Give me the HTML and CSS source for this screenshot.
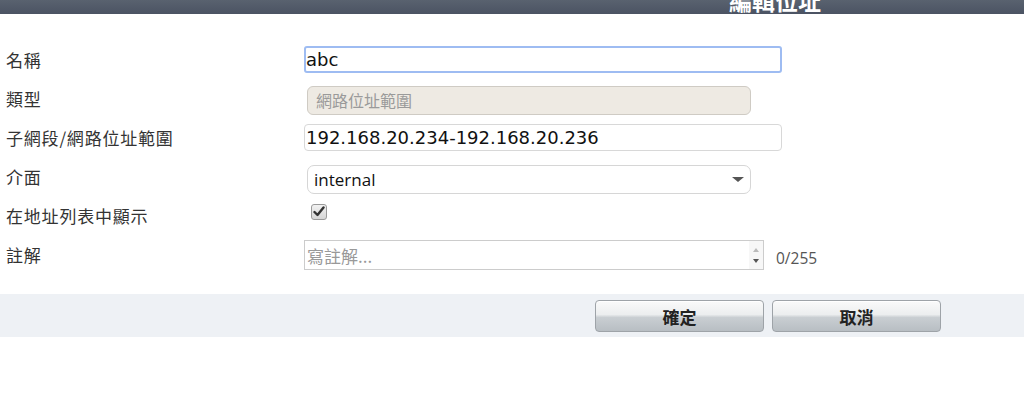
FILE: index.html
```html
<!DOCTYPE html>
<html lang="zh-Hant">
<head>
<meta charset="utf-8">
<title>編輯位址</title>
<link rel="stylesheet" href="styles.css">
</head>
<body>
<div class="header"><span class="title">編輯位址</span></div>
<div class="form">
  <div class="row">
    <div class="label">名稱</div>
    <div class="ctrl"><div class="input focus">abc</div></div>
  </div>
  <div class="row">
    <div class="label">類型</div>
    <div class="ctrl"><div class="disabled">網路位址範圍</div></div>
  </div>
  <div class="row">
    <div class="label">子網段/網路位址範圍</div>
    <div class="ctrl"><div class="input">192.168.20.234-192.168.20.236</div></div>
  </div>
  <div class="row">
    <div class="label">介面</div>
    <div class="ctrl"><div class="select"><span>internal</span><span class="arrow"></span></div></div>
  </div>
  <div class="row">
    <div class="label">在地址列表中顯示</div>
    <div class="ctrl"><div class="checkbox"><svg width="12" height="11" viewBox="0 0 12 11"><path d="M1.5 6 L4.5 9 L10.5 1.5" fill="none" stroke="#333" stroke-width="2.4" stroke-linecap="round" stroke-linejoin="round"/></svg></div></div>
  </div>
  <div class="row">
    <div class="label">註解</div>
    <div class="ctrl comment-ctrl">
      <div class="textarea"><span class="ph">寫註解...</span><span class="spin"><span class="up"></span><span class="down"></span></span></div>
      <span class="count">0/255</span>
    </div>
  </div>
</div>
<div class="footer">
  <button class="btn">確定</button>
  <button class="btn">取消</button>
</div>
</body>
</html>
```
FILE: styles.css
```css
html, body {
  margin: 0;
  padding: 0;
  background: #ffffff;
  font-family: "Noto Sans CJK TC", "DejaVu Sans", sans-serif;
  color: #222;
}
.header {
  height: 14px;
  overflow: hidden;
  background: linear-gradient(#59626f, #4b5363);
  padding-left: 729px;
}
.title {
  display: block;
  margin-top: -12px;
  font-size: 23px;
  line-height: 24px;
  font-weight: bold;
  color: #fff;
}
.form {
  padding-top: 26px;
}
.row {
  display: flex;
  align-items: center;
  height: 39px;
}
.label {
  width: 298px;
  padding-left: 6px;
  font-size: 17px;
  letter-spacing: 0.8px;
  color: #333;
}
.ctrl {
  display: flex;
  align-items: center;
}
.input {
  box-sizing: border-box;
  width: 478px;
  height: 27px;
  border: 1px solid #d8d8d8;
  border-radius: 4px;
  padding-left: 1px;
  font-family: "DejaVu Sans", sans-serif;
  font-size: 18px;
  line-height: 25px;
  color: #111;
}
.input.focus {
  border: 2px solid #9ebcf2;
  border-radius: 3px;
  line-height: 23px;
  padding-left: 0;
}
.disabled {
  box-sizing: border-box;
  width: 444px;
  height: 29px;
  margin-left: 3px;
  margin-top: 4px;
  border: 1px solid #cfcbc4;
  border-radius: 6px;
  background: #eeeae3;
  padding-left: 8px;
  font-size: 16px;
  line-height: 26px;
  color: #9a9a9a;
}
.select {
  box-sizing: border-box;
  width: 444px;
  height: 29px;
  margin-left: 3px;
  margin-top: 5px;
  border: 1px solid #d6d6d6;
  border-radius: 7px;
  padding: 0 5px 0 6px;
  display: flex;
  align-items: center;
  justify-content: space-between;
  font-family: "Open Sans", sans-serif;
  font-size: 17px;
  color: #111;
}
.arrow {
  width: 0;
  height: 0;
  border-left: 6px solid transparent;
  border-right: 6px solid transparent;
  border-top: 5px solid #555;
  margin-right: 1px;
}
.checkbox {
  box-sizing: border-box;
  width: 16px;
  height: 16px;
  margin-left: 7px;
  margin-top: -8px;
  border: 1px solid #9a9a9a;
  border-radius: 3px;
  background: linear-gradient(#f2f2f2, #d6d6d6);
  display: flex;
  align-items: center;
  justify-content: center;
}
.comment-ctrl {
  margin-top: 1px;
}
.textarea {
  box-sizing: border-box;
  width: 460px;
  height: 30px;
  border: 1px solid #cccccc;
  display: flex;
  align-items: center;
  justify-content: space-between;
  padding-left: 2px;
}
.ph {
  font-size: 17px;
  color: #999;
}
.spin {
  width: 14px;
  height: 28px;
  display: flex;
  flex-direction: column;
  align-items: center;
  justify-content: space-around;
  padding: 3px 0;
  box-sizing: border-box;
  background: #f7f7f7;
}
.up {
  width: 0;
  height: 0;
  border-left: 3px solid transparent;
  border-right: 3px solid transparent;
  border-bottom: 4px solid #bbb;
}
.down {
  width: 0;
  height: 0;
  border-left: 3px solid transparent;
  border-right: 3px solid transparent;
  border-top: 4px solid #555;
}
.count {
  margin-left: 12px;
  margin-top: 6px;
  font-family: "Open Sans", sans-serif;
  font-size: 15.5px;
  color: #555;
}
.footer {
  margin-top: 20px;
  height: 43px;
  background: #eef1f5;
  display: flex;
  align-items: center;
  gap: 8px;
  padding-left: 595px;
}
.btn {
  width: 169px;
  height: 32px;
  margin-top: 1px;
  border: 1px solid #9ea3a8;
  border-radius: 4px;
  background: linear-gradient(#fafafa 0%, #eceeef 45%, #c9ced2 55%, #b8bec3 100%);
  box-shadow: inset 0 1px 0 #fff;
  font-family: "Noto Sans CJK TC", sans-serif;
  font-size: 17px;
  font-weight: bold;
  color: #222;
  padding: 0;
}
```
